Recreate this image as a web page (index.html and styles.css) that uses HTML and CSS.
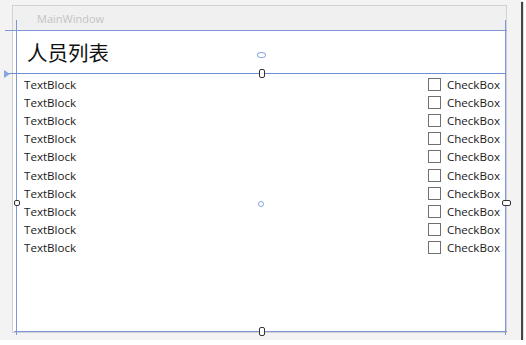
FILE: index.html
```html
<!DOCTYPE html>
<html lang="en">
<head>
    <meta charset="UTF-8">
    <title>MainWindow</title>
    <link rel="stylesheet" href="styles.css">
</head>
<body>
    <div class="shot">
        <div class="window">
            <div class="titlebar">MainWindow</div>
            <div class="content">
                <div class="header">人员列表</div>
                <div class="list" id="list"></div>
            </div>
        </div>

        <!-- designer adorners -->
        <div class="guide guide-left"></div>
        <div class="guide guide-right"></div>
        <div class="guide guide-top"></div>
        <div class="guide guide-mid"></div>
        <div class="guide guide-bottom"></div>
        <div class="arrow-left"></div>
        <div class="ring"></div>
        <div class="handle handle-mid"></div>
        <div class="handle handle-bottom"></div>
        <div class="handle handle-right"></div>
        <div class="handle handle-left"></div>
        <div class="dot"></div>
    </div>

    <script>
        const list = document.getElementById('list');
        for (let i = 0; i < 10; i++) {
            const row = document.createElement('div');
            row.className = 'row';
            row.innerHTML = '<span class="text">TextBlock</span>' +
                '<label class="check"><span class="box"></span>CheckBox</label>';
            list.appendChild(row);
        }
    </script>
</body>
</html>
```

FILE: styles.css
```css
body {
    margin: 0;
    background: #fff;
    font-family: "Open Sans", "Noto Sans", sans-serif;
}
.shot {
    position: relative;
    width: 521px;
    height: 340px;
    background: #f3f3f3;
    box-shadow: 2px 2px 1px #444;
    padding: 5px 0 0 12px;
    box-sizing: border-box;
}
.window {
    width: 495px;
    height: 328px;
    border: 1px solid #d2d2d2;
    box-sizing: border-box;
    background: #fff;
    display: flex;
    flex-direction: column;
}
.titlebar {
    height: 24px;
    background: #f0f0f0;
    color: #c4c4c4;
    font-size: 11px;
    line-height: 26px;
    padding-left: 24px;
    border-bottom: 1px solid #c8c8c8;
}
.content {
    flex: 1;
    display: flex;
    flex-direction: column;
}
.header {
    height: 43px;
    box-sizing: border-box;
    padding-left: 14px;
    font-family: "Noto Sans CJK SC", sans-serif;
    font-size: 20.5px;
    line-height: 43px;
    color: #111;
}
.list {
    padding: 1px 6px 0 11px;
    display: flex;
    flex-direction: column;
}
.row {
    height: 18.2px;
    display: flex;
    justify-content: space-between;
    align-items: center;
    font-size: 11.6px;
    color: #1a1a1a;
}
.check {
    display: flex;
    align-items: center;
    gap: 6px;
}
.box {
    width: 11px;
    height: 11px;
    border: 1px solid #707070;
    background: #fff;
}

/* adorners */
.guide {
    position: absolute;
    background: #7f97d6;
}
.guide-left {
    left: 16px;
    top: 20px;
    width: 1px;
    height: 315px;
}
.guide-right {
    left: 505px;
    top: 20px;
    width: 1px;
    height: 315px;
}
.guide-top {
    left: 5px;
    top: 30px;
    width: 502px;
    height: 1px;
}
.guide-mid {
    left: 5px;
    top: 73px;
    width: 501px;
    height: 1px;
    background: #6c8fd8;
}
.guide-bottom {
    left: 14px;
    top: 331px;
    width: 493px;
    height: 1px;
}
.arrow-left {
    position: absolute;
    left: 4px;
    top: 70px;
    width: 0;
    height: 0;
    border-top: 4px solid transparent;
    border-bottom: 4px solid transparent;
    border-left: 6px solid #8aa4e0;
}
.ring {
    position: absolute;
    left: 257px;
    top: 52px;
    width: 7px;
    height: 4px;
    border: 1px solid #8aa4e0;
    border-radius: 50%;
}
.handle {
    position: absolute;
    width: 4px;
    height: 7px;
    border: 1px solid #333;
    border-radius: 2px;
    background: #fff;
}
.handle-mid {
    left: 259px;
    top: 69px;
}
.handle-bottom {
    left: 259px;
    top: 327px;
}
.handle-right {
    left: 502px;
    top: 200px;
    width: 7px;
    height: 4px;
}
.handle-left {
    left: 14px;
    top: 200px;
    width: 4px;
    height: 4px;
}
.dot {
    position: absolute;
    left: 258px;
    top: 201px;
    width: 4px;
    height: 4px;
    border: 1px solid #8aa4e0;
    border-radius: 50%;
}
```
